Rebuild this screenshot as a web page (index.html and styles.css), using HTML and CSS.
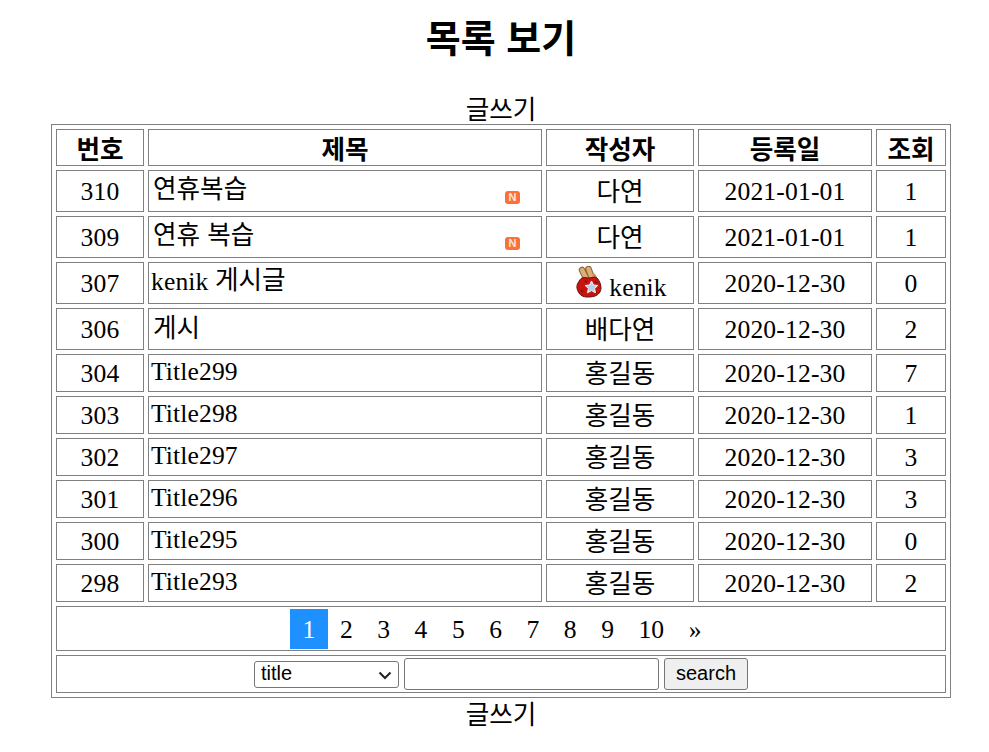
FILE: index.html
```html
<!DOCTYPE html>
<html lang="ko">
<head>
<meta charset="utf-8">
<title>목록 보기</title>
<link rel="stylesheet" href="styles.css">
</head>
<body>
<div class="page">
  <h1 class="heading">목록 보기</h1>
  <div class="write"><a href="#">글쓰기</a></div>
  <table class="board">
    <colgroup><col class="c1"><col class="c2"><col class="c3"><col class="c4"><col class="c5"></colgroup>
    <thead>
      <tr class="head"><th>번호</th><th>제목</th><th>작성자</th><th>등록일</th><th>조회</th></tr>
    </thead>
    <tbody>
      <tr class="tall"><td class="num">310</td><td><div class="title ko">연휴복습<span class="new">N</span></div></td><td class="ko">다연</td><td class="num">2021-01-01</td><td class="num">1</td></tr>
      <tr class="tall"><td class="num">309</td><td><div class="title ko">연휴 복습<span class="new">N</span></div></td><td class="ko">다연</td><td class="num">2021-01-01</td><td class="num">1</td></tr>
      <tr class="tall"><td class="num">307</td><td><div class="title">kenik <span class="ko">게시글</span></div></td><td class="num"><div class="writer"><svg class="medal" viewBox="0 0 26 32" aria-hidden="true"><path d="M6 4l4 8M12.500 3l3 8" fill="none" stroke="#8d6238" stroke-width="6.500" stroke-linecap="round"/><path d="M6 4l4 8M12.500 3l3 8" fill="none" stroke="#dcae78" stroke-width="4.500" stroke-linecap="round"/><path d="M18 9l2 4" fill="none" stroke="#c9965f" stroke-width="3" stroke-linecap="round"/><path d="M6 12c3-1 5 0 7 0s6-2 8 0 4 6 4 10-3 7-6 8-5 1-8 1-6-1-8-4-3-7-1-10 2-4 4-5z" fill="#c8140f" stroke="#6f0f0c"/><path d="M9 15l2 1M19 15l2 2M5 24l2 2M19 27l2-1" stroke="#6f0f0c" stroke-width="1.500"/><path d="M15.500 15l1.900 4 4.400.5-3.200 3 .9 4.300-4-2.200-4 2.200.9-4.300-3.200-3 4.400-.5z" fill="#b9d0e6" stroke="#f6f6f6"/></svg><span>kenik</span></div></td><td class="num">2020-12-30</td><td class="num">0</td></tr>
      <tr class="tall"><td class="num">306</td><td><div class="title ko">게시</div></td><td class="ko">배다연</td><td class="num">2020-12-30</td><td class="num">2</td></tr>
      <tr class="row"><td class="num">304</td><td><div class="title">Title299</div></td><td class="ko">홍길동</td><td class="num">2020-12-30</td><td class="num">7</td></tr>
      <tr class="row"><td class="num">303</td><td><div class="title">Title298</div></td><td class="ko">홍길동</td><td class="num">2020-12-30</td><td class="num">1</td></tr>
      <tr class="row"><td class="num">302</td><td><div class="title">Title297</div></td><td class="ko">홍길동</td><td class="num">2020-12-30</td><td class="num">3</td></tr>
      <tr class="row"><td class="num">301</td><td><div class="title">Title296</div></td><td class="ko">홍길동</td><td class="num">2020-12-30</td><td class="num">3</td></tr>
      <tr class="row"><td class="num">300</td><td><div class="title">Title295</div></td><td class="ko">홍길동</td><td class="num">2020-12-30</td><td class="num">0</td></tr>
      <tr class="row"><td class="num">298</td><td><div class="title">Title293</div></td><td class="ko">홍길동</td><td class="num">2020-12-30</td><td class="num">2</td></tr>
      <tr class="pager-row"><td colspan="5"><div class="pager"><a class="active" href="#">1</a><a href="#">2</a><a href="#">3</a><a href="#">4</a><a href="#">5</a><a href="#">6</a><a href="#">7</a><a href="#">8</a><a href="#">9</a><a href="#">10</a><a href="#">»</a></div></td></tr>
      <tr class="row"><td colspan="5"><form class="search"><span class="select-wrap"><select class="field-select"><option>title</option></select><svg class="chevron" viewBox="0 0 14 9" aria-hidden="true"><path d="M1.500 1.500 7 7l5.500-5.500" fill="none" stroke="#222" stroke-width="2"/></svg></span><input class="field-input" type="text"><button class="field-btn" type="button">search</button></form></td></tr>
    </tbody>
  </table>
  <div class="write bottom"><a href="#">글쓰기</a></div>
</div>
</body>
</html>
```
FILE: styles.css
```css
html, body { margin: 0; padding: 0; background: #fff; }
body { font-family: "Liberation Serif", "Noto Sans CJK KR", serif; font-size: 25.6px; color: #000; overflow-x: hidden; }
.page { margin-left: 13px; width: 976px; }
.heading { margin: 0; padding-top: 11px; height: 92px; box-sizing: border-box; text-align: center; font-size: 38px; line-height: 50px; font-weight: 700; font-family: "Noto Sans CJK KR", sans-serif; }
.write { height: 32px; text-align: center; font-family: "Noto Sans CJK KR", sans-serif; font-size: 25.6px; line-height: 32px; }
.write a { color: #000; text-decoration: none; }
.write.bottom { height: 34px; line-height: 30px; }
.board { width: 900px; margin: 0 auto; table-layout: fixed; border-collapse: separate; border-spacing: 4px; border: 1px solid #808080; }
.c1 { width: 88px; } .c2 { width: 394px; } .c3 { width: 148px; } .c4 { width: 174px; } .c5 { width: 70px; }
.board th, .board td { box-sizing: border-box; border: 1px solid #808080; padding: 0; text-align: center; vertical-align: middle; }
.board th { font-family: "Noto Sans CJK KR", sans-serif; font-size: 25.6px; font-weight: 700; line-height: 30px; }
.head { height: 37px; }
.tall { height: 42px; }
.row { height: 38px; }
.pager-row { height: 45px; }
.board td.num { font-size: 25.6px; line-height: 30px; padding-top: 2px; letter-spacing: .15px; }
.board td.ko { font-family: "Noto Sans CJK KR", sans-serif; font-size: 25.6px; line-height: 30px; padding-bottom: 2px; }
.title { display: flex; align-items: flex-start; padding-left: 2px; font-size: 25.6px; line-height: 30px; text-align: left; white-space: pre; margin-top: -3px; letter-spacing: .12px; }
.title .ko { font-family: "Noto Sans CJK KR", sans-serif; font-size: 25.6px; line-height: 30px; margin-top: -4px; letter-spacing: 0; }
.title.ko { padding-left: 4px; font-family: "Noto Sans CJK KR", sans-serif; margin-top: -6px; letter-spacing: 0; }
.new { display: block; width: 15px; height: 13px; margin: 19px 21px 0 auto; border-radius: 3px; background: #fb7138; color: #ffe6d8; font: 700 11px/13px "Liberation Sans", sans-serif; text-align: center; }
.writer { display: flex; justify-content: center; align-items: flex-end; gap: 7px; padding-left: 3px; }
.medal { width: 26px; height: 32px; margin-bottom: 5px; }
.pager { display: flex; justify-content: center; height: 40px; padding-left: 2px; }
.pager a { display: block; padding: 0 12.27px; color: #000; text-decoration: none; font-size: 25.6px; line-height: 42px; }
.pager a.active { background: #1e90ff; color: #fff; }
.search { display: flex; justify-content: center; align-items: center; gap: 5px; }
.select-wrap { position: relative; display: block; width: 145px; height: 27px; }
.chevron { position: absolute; right: 7px; top: 10px; width: 14px; height: 9px; pointer-events: none; }
.field-select { display: block; appearance: none; box-sizing: border-box; width: 145px; height: 27px; font: 20px "Liberation Sans", sans-serif; color: #000; border: 1px solid #767676; border-radius: 3px; background: #fff; padding: 0 0 2px 6px; }
.field-input { box-sizing: border-box; width: 255px; height: 32px; font: 20px "Liberation Sans", sans-serif; border: 1px solid #767676; border-radius: 3px; padding: 0 2px; }
.field-btn { box-sizing: border-box; width: 84px; height: 32px; font: 20px "Liberation Sans", sans-serif; border: 1px solid #767676; border-radius: 3px; background: #efefef; padding: 0 0 2px; color: #000; }
```
